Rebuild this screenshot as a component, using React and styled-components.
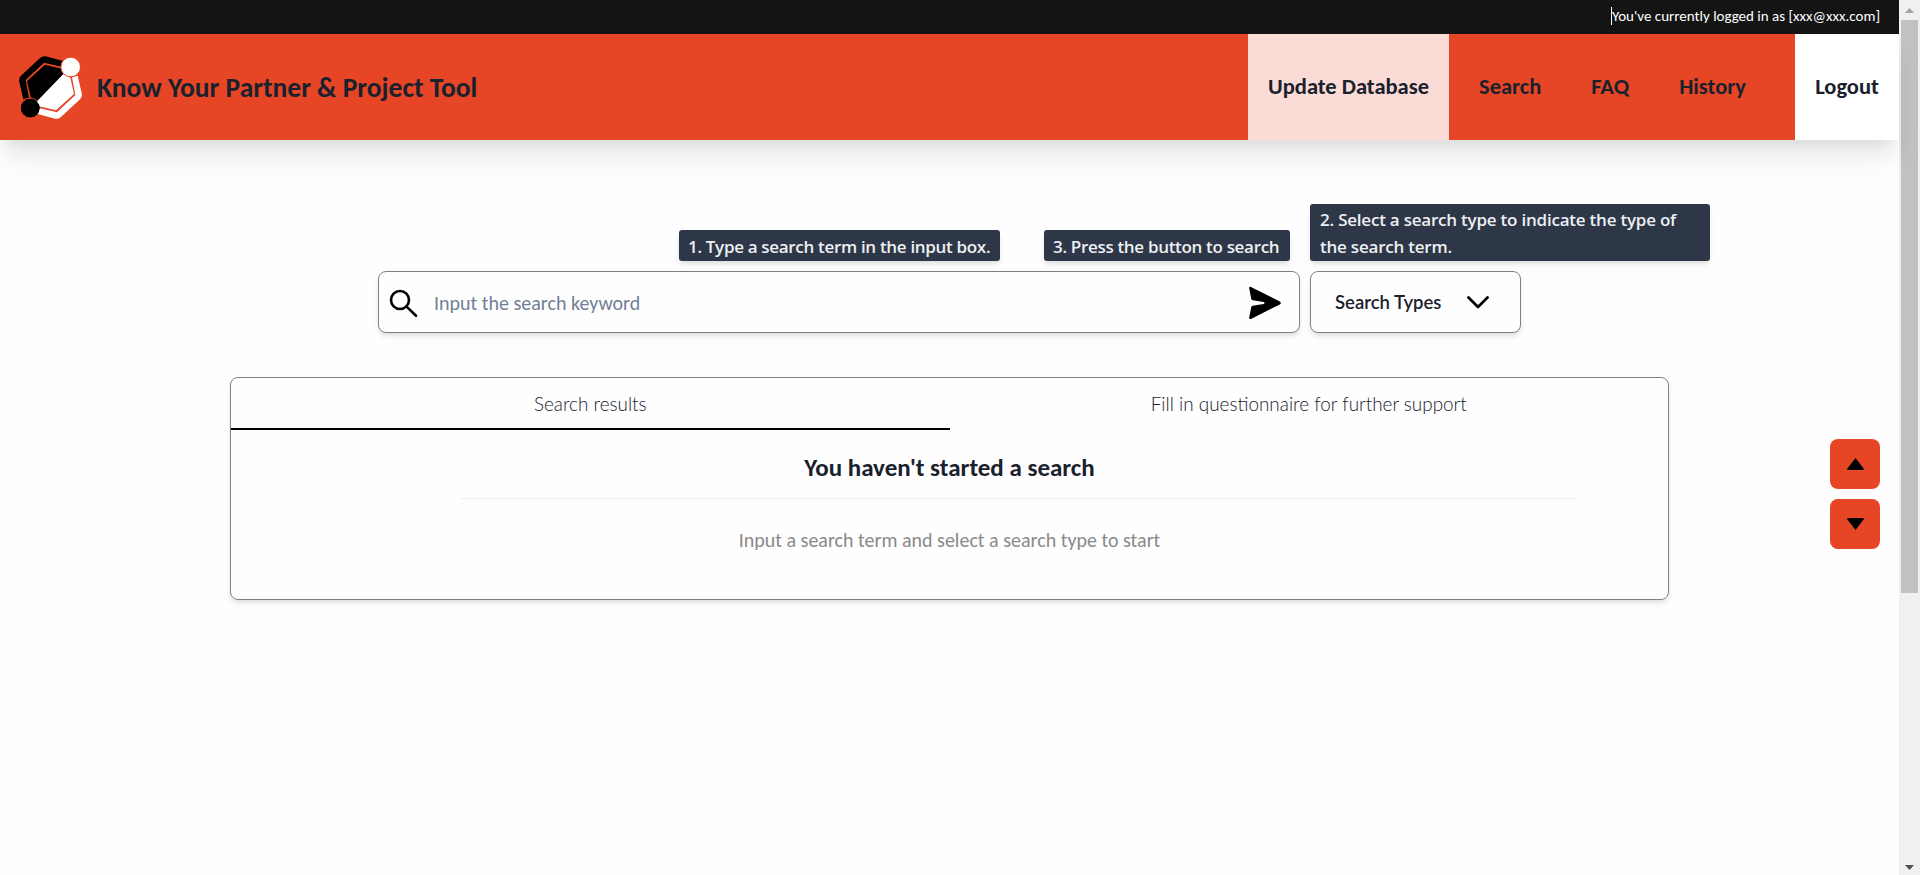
import React from "react";
import styled, { createGlobalStyle } from "styled-components";

const BRAND = "#e64626";

const GlobalStyle = createGlobalStyle`
  *, *::before, *::after { box-sizing: border-box; }
  body {
    margin: 0;
    overflow: hidden;
    background: #fefefe;
    color: #1a202c;
    font-family: Carlito, Lato, sans-serif;
    font-size: 20px;
    line-height: 1.5;
  }
  button, input { font: inherit; color: inherit; }
`;

const Window = styled.div`
  display: flex;
  height: 875px;
`;

const Page = styled.div`
  position: relative;
  flex: 1;
  min-width: 0;
`;

const TopBar = styled.div`
  display: flex;
  justify-content: flex-end;
  align-items: center;
  height: 34px;
  padding: 0 19px 2px 0;
  background: #141414;
  color: #fff;
  font-size: 15px;
  line-height: 18px;
`;

const LoginStatus = styled.span`
  height: 18px;
  border-left: 1px solid #fff;
`;

const Header = styled.header`
  display: flex;
  height: 106px;
  background: ${BRAND};
  box-shadow: 0 20px 25px -5px rgba(0, 0, 0, 0.1), 0 10px 10px -5px rgba(0, 0, 0, 0.04);
`;

const Brand = styled.div`
  display: flex;
  align-items: center;
  gap: 15px;
  margin-right: auto;
  padding-left: 19px;
`;

const Logo = styled.svg`
  width: 63px;
  height: 63px;
`;

const Title = styled.h1`
  margin: 0;
  padding-top: 1px;
  font-size: 27.5px;
  font-weight: 600;
`;

const Nav = styled.nav`
  display: flex;
  font-size: 22.5px;
  font-weight: 600;
`;

const NavGroup = styled.div`
  display: flex;
  align-items: center;
  gap: 50px;
  padding: 0 49px 0 30px;
`;

const NavLink = styled.a`
  white-space: nowrap;
`;

const NavBlock = styled.a`
  display: flex;
  align-items: center;
  justify-content: center;
  width: ${(p) => p.$width}px;
  background: ${(p) => p.$bg};
`;

const Main = styled.main`
  display: flex;
  flex-direction: column;
  align-items: center;
  gap: 44px;
  padding-top: 131px;
`;

const SearchRow = styled.div`
  display: flex;
  gap: 10px;
`;

const Field = styled.div`
  position: relative;
  display: flex;
  align-items: center;
  width: ${(p) => p.$width}px;
  height: 62px;
  border: 1px solid #808080;
  border-radius: 8px;
  background: #fefefe;
  box-shadow: 0 4px 6px -1px rgba(0, 0, 0, 0.1), 0 2px 4px -1px rgba(0, 0, 0, 0.06);
`;

const KeywordField = styled(Field)`
  padding: 1px 17px 0 10px;
`;

const TypeField = styled(Field)`
  justify-content: space-between;
  padding: 2px 31px 0 24px;
  font-family: Lato, sans-serif;
  font-size: 18.5px;
  font-weight: 600;
`;

const KeywordInput = styled.input`
  flex: 1;
  min-width: 0;
  margin-left: 15px;
  padding: 0;
  border: 0;
  outline: 0;
  background: transparent;
  &::placeholder { color: #718096; opacity: 1; }
`;

const Glyph = styled.svg`
  flex: none;
  width: ${(p) => p.$w}px;
  height: ${(p) => p.$h}px;
`;

const Hint = styled.div`
  position: absolute;
  bottom: calc(100% + 11px);
  padding: 3px 10px 1px 9px;
  border-radius: 3px;
  background: #2d3748;
  color: #edeff2;
  box-shadow: 0 4px 6px -1px rgba(0, 0, 0, 0.1), 0 2px 4px -1px rgba(0, 0, 0, 0.06);
  font-family: "Open Sans", sans-serif;
  font-size: 17px;
  font-weight: 600;
  line-height: 27px;
  letter-spacing: -0.32px;
  white-space: nowrap;
`;

const CenteredHint = styled(Hint)`
  left: 300px;
  width: 321px;
`;

const RightHint = styled(Hint)`
  right: 9px;
  width: 246px;
`;

const WideHint = styled(Hint)`
  left: -1px;
  width: 400px;
  padding: 2px 10px 1px;
  letter-spacing: -0.22px;
  white-space: normal;
`;

const Panel = styled.section`
  width: 1439px;
  height: 223px;
  border: 1px solid #808080;
  border-radius: 8px;
  box-shadow: 0 4px 6px -1px rgba(0, 0, 0, 0.1), 0 2px 4px -1px rgba(0, 0, 0, 0.06);
`;

const Tabs = styled.div`
  display: flex;
`;

const Tab = styled.button`
  flex: 1;
  height: 52px;
  padding: 2px 0 0;
  border: 0;
  border-bottom: 2px solid ${(p) => (p.$active ? "#000" : "transparent")};
  background: transparent;
  font-family: Lato, sans-serif;
  font-size: 18.9px;
  font-weight: 300;
`;

const EmptyState = styled.div`
  display: flex;
  flex-direction: column;
  align-items: center;
  padding-top: 19px;
`;

const EmptyTitle = styled.h2`
  margin: 0;
  font-size: 25px;
  font-weight: 600;
`;

const Divider = styled.hr`
  align-self: flex-end;
  width: 1116px;
  height: 1px;
  margin: 11px 91px 26px 0;
  border: 0;
  background: #eeeeee;
`;

const EmptyText = styled.p`
  margin: 0;
  color: #8a8a8a;
`;

const JumpButtons = styled.div`
  position: absolute;
  top: 439px;
  right: 19px;
  display: flex;
  flex-direction: column;
  gap: 10px;
`;

const JumpButton = styled.button`
  display: flex;
  align-items: center;
  justify-content: center;
  width: 50px;
  height: 50px;
  padding: 0;
  border: 0;
  border-radius: 8px;
  background: ${BRAND};
`;

const ScrollTrack = styled.div`
  display: flex;
  flex-direction: column;
  align-items: center;
  width: 21px;
  padding: 8px 0 5px;
  background: #f0f0f0;
`;

const ScrollThumb = styled.div`
  width: 17px;
  height: 573px;
  margin: 7px 0 auto;
  background: #c1c1c1;
`;

function LogoHalf({ color, transform }) {
  return (
    <g fill={color} transform={transform}>
      <path d="M160 43 L107 29 Q98 27 91 33 L32 88 Q26 94 28 106 L40 158 L57 153 L47 100 L102 48 L154 60 Z" />
      <path d="M105 54 L156 66 L164 79 L80 166 L62 152 L51 103 Z" />
      <circle cx="61" cy="184" r="29.5" stroke={BRAND} strokeWidth="3" />
    </g>
  );
}

export default function App() {
  return (
    <Window>
      <GlobalStyle />
      <Page>
        <TopBar>
          <LoginStatus>You've currently logged in as [xxx@xxx.com]</LoginStatus>
        </TopBar>
        <Header>
          <Brand>
            <Logo viewBox="27 28 189 189">
              <LogoHalf color="#000" />
              <LogoHalf color="#fff" transform="rotate(180 121.5 122.5)" />
              <circle cx="61" cy="184" r="28" />
            </Logo>
            <Title>Know Your Partner &amp; Project Tool</Title>
          </Brand>
          <Nav>
            <NavBlock $width={201} $bg="#fadbd5">Update Database</NavBlock>
            <NavGroup>
              <NavLink>Search</NavLink>
              <NavLink>FAQ</NavLink>
              <NavLink>History</NavLink>
            </NavGroup>
            <NavBlock $width={104} $bg="#fff">Logout</NavBlock>
          </Nav>
        </Header>
        <Main>
          <SearchRow>
            <KeywordField $width={922}>
              <CenteredHint>1. Type a search term in the input box.</CenteredHint>
              <RightHint>3. Press the button to search</RightHint>
              <Glyph $w={30} $h={30} viewBox="0 0 30 30" fill="none" stroke="#000" strokeWidth="2.6" strokeLinecap="round">
                <circle cx="11" cy="12" r="9" />
                <path d="M17.6 18.6 L27 27.8" />
              </Glyph>
              <KeywordInput placeholder="Input the search keyword" />
              <Glyph $w={34} $h={34} viewBox="0 0 34 34">
                <path d="M1.2 2.3 C1 1.1 2 0.6 3 1 L31.8 15.4 C33.2 16.2 33.2 17.6 31.8 18.4 L3 32.9 C1.8 33.4 1 32.8 1.2 31.6 L3.2 21.2 Q3.5 20 4.7 19.8 L15.8 17.9 Q17.3 17 15.8 16 L4.7 14.2 Q3.5 14 3.2 12.7 Z" />
              </Glyph>
            </KeywordField>
            <TypeField $width={211}>
              <WideHint>2. Select a search type to indicate the type of the search term.</WideHint>
              Search Types
              <Glyph $w={22} $h={14} viewBox="0 0 22 14" fill="none" stroke="#000" strokeWidth="2.7" strokeLinecap="round" strokeLinejoin="round">
                <path d="M1.5 1.5 L11 11 L20.5 1.5" />
              </Glyph>
            </TypeField>
          </SearchRow>
          <Panel>
            <Tabs>
              <Tab $active>Search results</Tab>
              <Tab>Fill in questionnaire for further support</Tab>
            </Tabs>
            <EmptyState>
              <EmptyTitle>You haven't started a search</EmptyTitle>
              <Divider />
              <EmptyText>Input a search term and select a search type to start</EmptyText>
            </EmptyState>
          </Panel>
        </Main>
        <JumpButtons>
          <JumpButton aria-label="Up">
            <Glyph $w={17} $h={12} viewBox="0 0 17 12"><path d="M8.5 0 L17 11 L16.4 12 H0.6 L0 11 Z" /></Glyph>
          </JumpButton>
          <JumpButton aria-label="Down">
            <Glyph $w={17} $h={12} viewBox="0 0 17 12"><path d="M8.5 12 L17 1 L16.4 0 H0.6 L0 1 Z" /></Glyph>
          </JumpButton>
        </JumpButtons>
      </Page>
      <ScrollTrack>
        <Glyph $w={9} $h={5} viewBox="0 0 9 5" fill="#a3a3a3"><path d="M4.5 0 L9 5 H0 Z" /></Glyph>
        <ScrollThumb />
        <Glyph $w={9} $h={5} viewBox="0 0 9 5" fill="#505050"><path d="M4.5 5 L9 0 H0 Z" /></Glyph>
      </ScrollTrack>
    </Window>
  );
}
